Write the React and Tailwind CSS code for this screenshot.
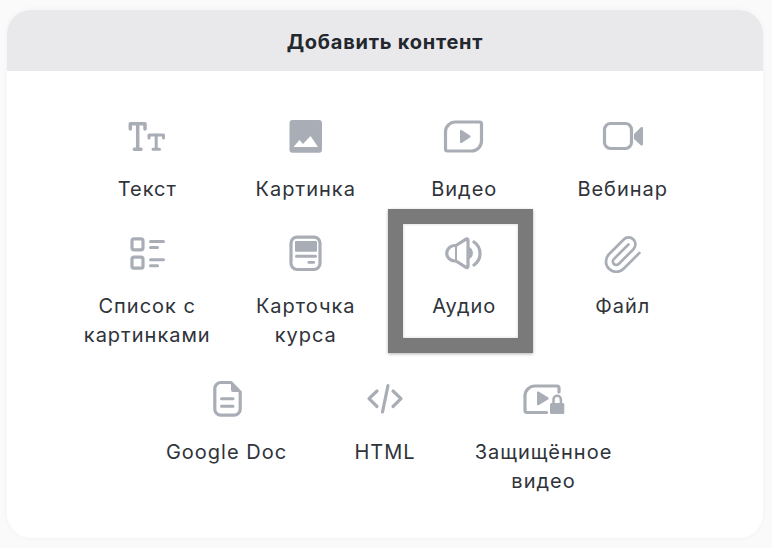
const Tt = () => (
  <g fill="none" stroke="currentColor" strokeWidth="3.500" strokeLinecap="round" strokeLinejoin="round">
    <path d="M5.300 13V7.800H20V13M12.700 7.800V33.200M9.300 33.200H16" />
    <path d="M24 22V19H38.500V22" strokeWidth="3" />
    <path d="M31.200 19V33.200M28 33.200H34.500" strokeWidth="3" />
  </g>
)

const Picture = () => (
  <>
    <rect x="5.500" y="4" width="32.500" height="32.700" rx="3" fill="currentColor" />
    <path d="M9.500 31L15.500 24L19 28L26.500 20L34 31Z" fill="#fff" />
  </>
)

const Video = () => (
  <>
    <path d="M13.500 6H37.500a2 2 0 0 1 2 2V25a10 10 0 0 1-10 10H5.500a2 2 0 0 1-2-2V16a10 10 0 0 1 10-10Z" fill="none" stroke="currentColor" strokeWidth="3.200" />
    <path d="M18 15a1 1 0 0 1 1.500-.9L28 19.400a1.300 1.300 0 0 1 0 2.200L19.500 26.900a1 1 0 0 1-1.500-.9Z" fill="currentColor" />
  </>
)

const Webinar = () => (
  <>
    <rect x="3.500" y="7.500" width="27" height="25" rx="6" fill="none" stroke="currentColor" strokeWidth="3.200" />
    <path d="M33 18L39.500 11.500a1.400 1.400 0 0 1 2.500 1V28a1.400 1.400 0 0 1-2.500 1L33 23Z" fill="currentColor" />
  </>
)

const List = () => (
  <g fill="none" stroke="currentColor" strokeWidth="3.200" strokeLinecap="round">
    <rect x="7" y="5.800" width="11" height="11" rx="2" />
    <rect x="7" y="24.200" width="11" height="11" rx="2" />
    <path d="M25.500 8.500H38.500M25.500 14.500H32.500M25.500 26.700H38.500M25.500 32.700H32.500" strokeWidth="3" />
  </g>
)

const Card = () => (
  <>
    <rect x="7" y="4.200" width="29" height="32.300" rx="6" fill="none" stroke="currentColor" strokeWidth="3.200" />
    <rect x="11" y="8" width="22" height="10.700" rx="1" fill="currentColor" />
    <rect x="11" y="21.700" width="22" height="3" rx="1.500" fill="currentColor" />
    <rect x="23.500" y="28" width="7.500" height="2.700" rx="1.300" fill="currentColor" />
  </>
)

const Audio = () => (
  <>
    <path d="M14 12.500L24 6.200a1.200 1.200 0 0 1 2 1V33.300a1.200 1.200 0 0 1-2 1L14 28H12.500a7.750 7.750 0 0 1 0-15.500Z" fill="none" stroke="currentColor" strokeWidth="3.200" strokeLinejoin="round" />
    <path d="M14 13V28" fill="none" stroke="currentColor" strokeWidth="2" />
    <path d="M26 13.700a6.500 6.500 0 0 1 0 12.600Z" fill="currentColor" />
    <path d="M32 9a14 14 0 0 1 0 23" fill="none" stroke="currentColor" strokeWidth="3.200" strokeLinecap="round" />
  </>
)

const Clip = () => (
  <path
    transform="translate(1.500 1) scale(1.720)"
    d="m21.440 11.050-9.190 9.190a6 6 0 0 1-8.490-8.490l8.570-8.570A4 4 0 1 1 18 8.840l-8.590 8.570a2 2 0 0 1-2.830-2.830l8.490-8.480"
    fill="none"
    stroke="currentColor"
    strokeWidth="1.550"
    strokeLinecap="round"
    strokeLinejoin="round"
  />
)

const Doc = () => (
  <g transform="translate(0 1)">
    <path d="M15.800 2.500H26L35.200 12V29.200a6 6 0 0 1-6 6H15.800a6 6 0 0 1-6-6V8.500a6 6 0 0 1 6-6Z" fill="none" stroke="currentColor" strokeWidth="3.200" strokeLinejoin="round" />
    <path d="M26 2.500L35.200 12H28a2 2 0 0 1-2-2Z" fill="currentColor" />
    <path d="M16.500 18.700H28M16.500 26.300H28" fill="none" stroke="currentColor" strokeWidth="3" strokeLinecap="round" />
  </g>
)

const Code = () => (
  <path transform="translate(0 1)" d="M14 11L6 18.700L14 26.500M30 11L38 18.700L30 26.500M25 5.500L19.500 32" fill="none" stroke="currentColor" strokeWidth="3.200" strokeLinecap="round" strokeLinejoin="round" />
)

const LockedVideo = () => (
  <g transform="translate(0 1)">
    <path d="M24.500 32.500H5a2 2 0 0 1-2-2V16a10 10 0 0 1 10-10H35a2 2 0 0 1 2 2V12" fill="none" stroke="currentColor" strokeWidth="3.200" strokeLinecap="round" />
    <path d="M15 12.500a1 1 0 0 1 1.500-.9L26 17.300a1.300 1.300 0 0 1 0 2.200L16.500 25.200a1 1 0 0 1-1.500-.9Z" fill="currentColor" />
    <rect x="28" y="23" width="14.300" height="11" rx="1.500" fill="currentColor" />
    <path d="M31.500 24V19.500a3.700 3.700 0 0 1 7.400 0V24" fill="none" stroke="currentColor" strokeWidth="2.500" />
  </g>
)

const items = [
  { label: 'Текст', icon: Tt },
  { label: 'Картинка', icon: Picture },
  { label: 'Видео', icon: Video },
  { label: 'Вебинар', icon: Webinar },
  { label: 'Список с картинками', icon: List },
  { label: 'Карточка курса', icon: Card },
  { label: 'Аудио', icon: Audio, active: true },
  { label: 'Файл', icon: Clip },
  { label: 'Google Doc', icon: Doc },
  { label: 'HTML', icon: Code },
  { label: 'Защищённое видео', icon: LockedVideo },
]

function Item({ item }) {
  const Icon = item.icon
  return (
    <div className="relative w-[145px] pt-[24px] pb-[5px] flex flex-col items-center text-center">
      {item.active && (
        <div className="absolute top-0 left-[-4px] w-[145px] h-[144px] border-[15px] border-[#7a7a7a] shadow-[0_1px_3px_rgba(0,0,0,0.3),inset_0_0_3px_rgba(0,0,0,0.2)]" />
      )}
      <svg width="44" height="40" viewBox="0 0 44 40" className="relative text-[#a9adb6] mb-[19px]">
        <Icon />
      </svg>
      <span className="relative text-[20px] leading-[29px] tracking-[1px] text-[#2f333a]">{item.label}</span>
    </div>
  )
}

export default function App() {
  return (
    <div className="w-[772px] h-[548px] bg-[#fafafa] pt-[10px] pl-[7px] font-['Inter',sans-serif] overflow-hidden">
      <div className="w-[756px] h-[528px] bg-white rounded-[24px] overflow-hidden shadow-[0_0_6px_rgba(0,0,0,0.04)]">
        <div className="h-[61px] bg-[#e9e9eb] flex items-center justify-center pt-[2px]">
          <h2 className="text-[20px] font-bold tracking-[0.75px] text-[#23272e]">Добавить контент</h2>
        </div>
        <div className="pt-[21px] px-[40px] flex flex-wrap justify-center gap-x-[13.500px]">
          {items.map((item) => (
            <Item key={item.label} item={item} />
          ))}
        </div>
      </div>
    </div>
  )
}
